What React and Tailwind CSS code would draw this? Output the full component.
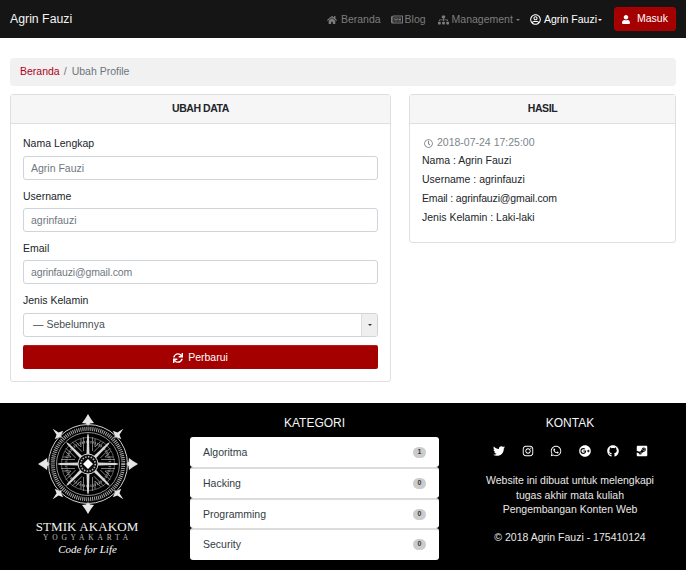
import React from "react";
import { FaHome, FaRegNewspaper, FaSitemap, FaRegUserCircle, FaUser, FaSync, FaRegClock, FaTwitter, FaInstagram, FaWhatsapp, FaGooglePlus, FaGithub, FaSteamSquare } from "react-icons/fa";

function Logo() {
  const spokes = [0, 45, 90, 135, 180, 225, 270, 315];
  return (
    <svg width="104" height="104" viewBox="-52 -52 104 104" className="block">
      {spokes.map((a, i) => (
        <g key={a} transform={`rotate(${a})`}>
          <path d={i % 2 === 0 ? "M0 -50 L3 -45 L6 -41 L2 -40.5 L0 -38 L-2 -40.5 L-6 -41 L-3 -45 Z" : "M0 -50 L1.5 -43 L6 -41 L1.5 -39.5 L0 -37 L-1.5 -39.5 L-6 -41 L-1.5 -43 Z"} fill="#e6e6e6" />
        </g>
      ))}
      <circle r="39.5" fill="none" stroke="#cfcfcf" strokeWidth="1" />
      <circle r="35.2" fill="none" stroke="#a8a8a8" strokeWidth="4" strokeDasharray="1 1" />
      <circle r="31.5" fill="none" stroke="#cfcfcf" strokeWidth="0.7" />
      <circle r="22" fill="none" stroke="#8a8a8a" strokeWidth="2.5" strokeDasharray="1 1.2" />
      <circle r="26.5" fill="none" stroke="#777" strokeWidth="0.8" />
      {spokes.map((a) => (
        <g key={a} transform={`rotate(${a})`}>
          <path d="M-1.5 -9 L-0.9 -28 L0 -31 L0.9 -28 L1.5 -9 Z" fill="#d8d8d8" />
          <path d="M-4.5 -27 L-4.5 -13 M4.5 -27 L4.5 -13 M-7 -25 L-7 -17 M7 -25 L7 -17" stroke="#9a9a9a" strokeWidth="0.8" />
        </g>
      ))}
      <circle r="10" fill="#0a0a0a" stroke="#d0d0d0" strokeWidth="1" />
      <circle r="7.2" fill="none" stroke="#bbb" strokeWidth="1.6" strokeDasharray="1.4 1.4" />
      <path d="M0 -5 L2 -3 L5 0 L2 3 L0 5 L-2 3 L-5 0 L-2 -3 Z" fill="#fff" />
    </svg>
  );
}

function Field({ label, value, mt, inputClass }) {
  return (
    <div className={mt}>
      <label className="block text-[10.5px] leading-[14px] text-[#212529]">{label}</label>
      <input readOnly value={value} className={`block w-full h-[24px] px-[7px] text-[10.5px] text-[#6f777e] bg-white border border-[#ced4da] rounded-[3px] outline-none ${inputClass}`} />
    </div>
  );
}

const cats = [["Algoritma", "1", "h-[30px] pt-[1px]"], ["Hacking", "0", "h-[31px] border-t-[2px] border-[#dcdcdc]"], ["Programming", "0", "h-[30px] pt-[1px] border-t-[2px] border-[#dcdcdc]"], ["Security", "0", "h-[32px] pb-[1px] border-t-[2px] border-[#dcdcdc]"]];
const socials = [FaTwitter, FaInstagram, FaWhatsapp, FaGooglePlus, FaGithub, FaSteamSquare];

export default function App() {
  return (
    <div className="w-[686px] h-[570px] overflow-hidden bg-white font-['Liberation_Sans',Arial,sans-serif] text-[10.5px] text-[#212529]">
      <nav className="h-[38px] bg-[#151515] flex items-center pl-[10px] pr-[10px]">
        <span className="text-[12.3px] text-[#f4f4f4]">Agrin Fauzi</span>
        <div className="ml-auto flex items-center text-[10.5px] text-[#7d7d7d]">
          <span className="flex items-center pt-[1px]"><FaHome className="w-[10px] h-[10px] mr-[4px]" />Beranda</span>
          <span className="flex items-center pt-[1px] ml-[10px]"><FaRegNewspaper className="w-[12px] h-[11px] mr-[2px]" />Blog</span>
          <span className="flex items-center pt-[1px] ml-[12px]"><FaSitemap className="w-[11px] h-[10px] mr-[3px]" />Management<i className="ml-[3px] border-x-[2.5px] border-t-[2.5px] border-x-transparent border-t-[#7d7d7d]" /></span>
          <span className="flex items-center pt-[1px] ml-[10px] text-white"><FaRegUserCircle className="w-[11px] h-[11px] mr-[3px]" />Agrin Fauzi<i className="ml-[1px] border-x-[2.5px] border-t-[2.5px] border-x-transparent border-t-white" /></span>
          <span className="flex items-center justify-center ml-[12px] w-[62px] h-[24px] rounded-[3px] bg-[#a50000] border border-[#b00000] text-white"><FaUser className="w-[8px] h-[9px] mr-[7px]" />Masuk</span>
        </div>
      </nav>

      <div className="px-[10px] pt-[20px]">
        <div className="h-[28px] bg-[#f1f1f1] rounded-[4px] flex items-center px-[10px] text-[10.5px]">
          <span className="text-[#b00020]">Beranda</span>
          <span className="mx-[4px] text-[#6c757d]">/</span>
          <span className="text-[#6c757d] ml-[1px]">Ubah Profile</span>
        </div>

        <div className="mt-[8px] grid grid-cols-[381px_267px] gap-[18px] items-start">
          <section className="h-[288px] border border-[#dfdfdf] rounded-[3px]">
            <h2 className="h-[29px] bg-[#f6f6f6] border-b border-[#dfdfdf] flex items-center justify-center text-[10.5px] tracking-[-0.45px] font-bold text-[#212529]">UBAH DATA</h2>
            <div className="px-[12px] pt-[12px]">
              <Field label="Nama Lengkap" value="Agrin Fauzi" inputClass="mt-[6px]" />
              <Field label="Username" value="agrinfauzi" mt="mt-[9px]" inputClass="mt-[5px]" />
              <Field label="Email" value="agrinfauzi@gmail.com" mt="mt-[9px]" inputClass="mt-[5px] tracking-[-0.15px]" />
              <div className="mt-[9px]">
                <label className="block text-[10.5px] leading-[14px]">Jenis Kelamin</label>
                <div className="mt-[6px] h-[24px] flex items-center bg-white border border-[#ced4da] rounded-[3px] overflow-hidden">
                  <span className="flex-1 pl-[9px] text-[10.5px] text-[#495057]">— Sebelumnya</span>
                  <span className="w-[16px] h-full bg-[#efefef] border-l border-[#ddd] flex items-center justify-center">
                    <i className="border-x-[2px] border-t-[2.5px] border-x-transparent border-t-[#333]" />
                  </span>
                </div>
              </div>
              <button className="mt-[8px] w-full h-[24px] rounded-[2px] bg-[#a50000] border-t border-[#b81a1a] text-white text-[10.5px] flex items-center justify-center">
                <FaSync className="w-[10px] h-[10px] mr-[5px]" />Perbarui
              </button>
            </div>
          </section>

          <section className="h-[149px] border border-[#dfdfdf] rounded-[3px]">
            <h2 className="h-[29px] bg-[#f6f6f6] border-b border-[#dfdfdf] flex items-center justify-center text-[10.5px] tracking-[-0.45px] font-bold">HASIL</h2>
            <div className="px-[12px] pt-[10px] text-[10.5px]">
              <p className="flex items-center h-[17px] pl-[2px] pt-[1px] text-[#7d858c]"><FaRegClock className="w-[9px] h-[9px] mr-[4px]" />2018-07-24 17:25:00</p>
              <p className="leading-[19px]">Nama : Agrin Fauzi</p>
              <p className="leading-[19px]">Username : agrinfauzi</p>
              <p className="leading-[19px] tracking-[-0.15px]">Email : agrinfauzi@gmail.com</p>
              <p className="leading-[19px]">Jenis Kelamin : Laki-laki</p>
            </div>
          </section>
        </div>
      </div>

      <footer className="mt-[21px] h-[167px] bg-black grid grid-cols-[175px_279px_232px] text-white">
        <div className="flex flex-col items-center pt-[9px]">
          <Logo />
          <div className="mt-[4px] pr-[1px] font-['Liberation_Serif',serif] text-[13px] leading-[13px] tracking-[0.1px] text-[#f2f2f2]">STMIK AKAKOM</div>
          <div className="font-['Liberation_Serif',serif] text-[7.5px] leading-[9px] tracking-[3.8px] text-[#bdbdbd]">YOGYAKARTA</div>
          <div className="font-['Liberation_Serif',serif] italic text-[11px] leading-[14px] text-white">Code for Life</div>
        </div>
        <div className="px-[15px]">
          <h3 className="pt-[10px] h-[34px] text-center text-[12px] leading-[20px] text-[#f5f5f5]">KATEGORI</h3>
          <ul>
            {cats.map(([name, n, h]) => (
              <li key={name} className={`${h} bg-white rounded-[3px] flex items-center justify-between px-[13px] text-[10.5px] text-[#333b44]`}>
                {name}
                <span className="w-[13px] h-[11px] rounded-full bg-[#cccccc] text-[7px] font-bold flex items-center justify-center">{n}</span>
              </li>
            ))}
          </ul>
        </div>
        <div className="text-center">
          <h3 className="pt-[10px] h-[34px] text-[12px] leading-[20px] text-[#f5f5f5]">KONTAK</h3>
          <div className="flex justify-center gap-[16.6px] pt-[8px] pl-[1px]">
            {socials.map((Icon, i) => <Icon key={i} className="w-[12px] h-[12px] text-white" />)}
          </div>
          <p className="mt-[16px] text-[10.5px] leading-[14.5px] text-[#e8e8e8]">Website ini dibuat untuk melengkapi<br />tugas akhir mata kuliah<br />Pengembangan Konten Web</p>
          <p className="mt-[13px] text-[10.5px] leading-[14.5px] text-[#e8e8e8]">© 2018 Agrin Fauzi - 175410124</p>
        </div>
      </footer>
    </div>
  );
}
